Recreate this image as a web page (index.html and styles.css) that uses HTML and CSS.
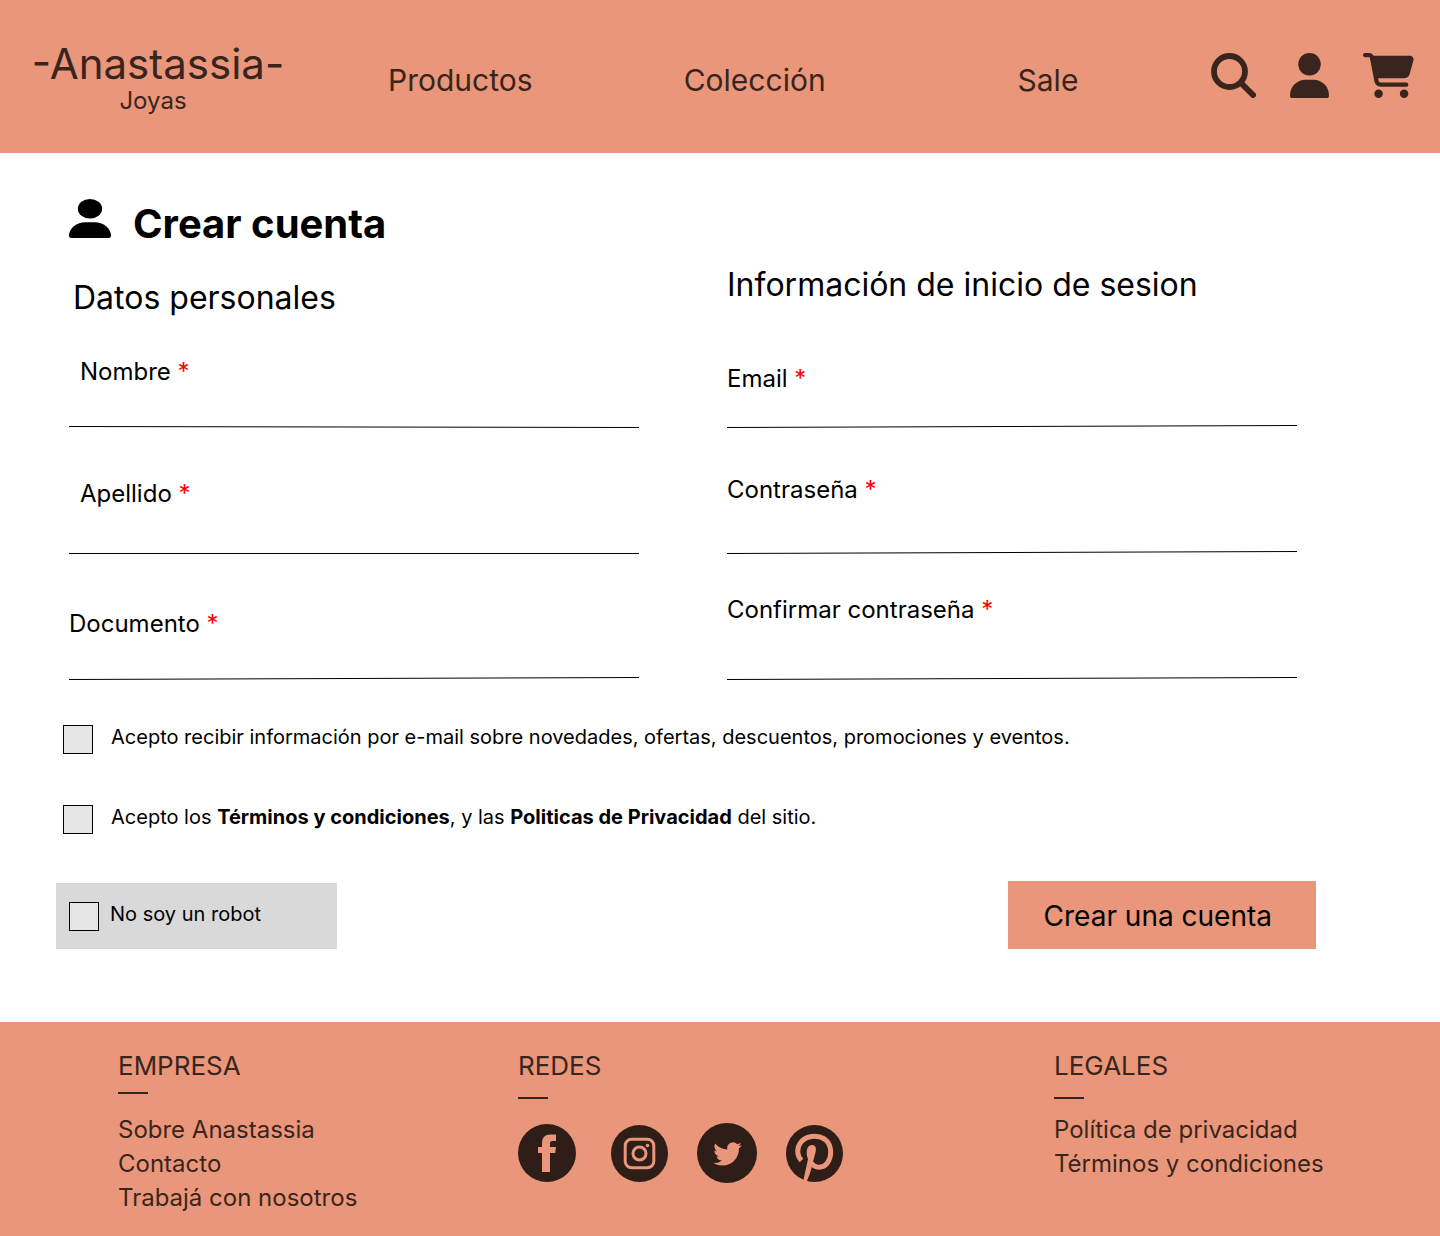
FILE: index.html
```html
<!DOCTYPE html>
<html lang="es">
<head>
<meta charset="utf-8">
<meta name="viewport" content="width=device-width, initial-scale=1">
<title>Anastassia Joyas - Crear cuenta</title>
<link rel="stylesheet" href="styles.css">
</head>
<body>
<header class="header">
  <a class="brand" href="#"><span class="brand-name">-Anastassia-</span><span class="brand-sub">Joyas</span></a>
  <nav class="nav">
    <a href="#">Productos</a>
    <a href="#">Colección</a>
    <a href="#">Sale</a>
  </nav>
  <div class="tools">
    <button class="tool" type="button" aria-label="Buscar">
      <svg width="45" height="45" viewBox="0 0 45 45"><circle cx="18.500" cy="18.500" r="15.500" fill="none" stroke="currentColor" stroke-width="5.800"/><path d="M30.500 30.500L42 42" stroke="currentColor" stroke-width="6" stroke-linecap="round"/></svg>
    </button>
    <button class="tool" type="button" aria-label="Mi cuenta">
      <svg width="39" height="45" viewBox="0 0 39 45" fill="currentColor"><circle cx="19.500" cy="11.250" r="11.250"/><path d="M15.500 26.700h8C32 26.700 39 33.600 39 42.400A2.600 2.600 0 0 1 36.400 45H2.600A2.600 2.600 0 0 1 0 42.400C0 33.600 7 26.700 15.500 26.700z"/></svg>
    </button>
    <button class="tool" type="button" aria-label="Carrito">
      <svg width="51" height="45" viewBox="0 0 576 512" preserveAspectRatio="none" fill="currentColor"><path d="M0 24C0 10.700 10.700 0 24 0H69.500c22 0 41.500 12.800 50.600 32h411c26.300 0 45.500 25 38.600 50.400l-41 152.300c-8.500 31.400-37 53.300-69.500 53.300H170.700l5.400 28.500c2.200 11.300 12.100 19.500 23.600 19.500H488c13.300 0 24 10.700 24 24s-10.700 24-24 24H199.700c-34.600 0-64.300-24.600-70.700-58.500L77.400 54.500c-.7-3.800-4-6.500-7.900-6.500H24C10.700 48 0 37.300 0 24zM128 464a48 48 0 1 1 96 0 48 48 0 1 1-96 0zm336-48a48 48 0 1 1 0 96 48 48 0 1 1 0-96z"/></svg>
    </button>
  </div>
</header>

<main class="main">
  <h1 class="title">
    <svg width="42" height="39" viewBox="0 0 39 45" preserveAspectRatio="none" fill="currentColor" aria-hidden="true"><circle cx="19.500" cy="11.250" r="11.250"/><path d="M15.500 26.700h8C32 26.700 39 33.600 39 42.400A2.600 2.600 0 0 1 36.400 45H2.600A2.600 2.600 0 0 1 0 42.400C0 33.600 7 26.700 15.500 26.700z"/></svg>
    Crear cuenta
  </h1>
  <form class="form">
    <div class="columns">
      <section class="column">
        <h2 class="subtitle subtitle-low">Datos personales</h2>
        <div class="field indent">
          <label for="nombre">Nombre <span class="req">*</span></label>
          <input class="h-s" id="nombre" type="text">
          <svg class="rule" viewBox="0 0 570 3" preserveAspectRatio="none"><path d="M0 1.500L570 2.500"/></svg>
        </div>
        <div class="field indent">
          <label for="apellido">Apellido <span class="req">*</span></label>
          <input class="h-m" id="apellido" type="text">
          <svg class="rule" viewBox="0 0 570 3" preserveAspectRatio="none"><path d="M0 2.500H570"/></svg>
        </div>
        <div class="field">
          <label for="documento">Documento <span class="req">*</span></label>
          <input class="h-s" id="documento" type="text">
          <svg class="rule" viewBox="0 0 570 3" preserveAspectRatio="none"><path d="M0 2.500L570 .5"/></svg>
        </div>
      </section>
      <section class="column">
        <h2 class="subtitle">Información de inicio de sesion</h2>
        <div class="field">
          <label for="email">Email <span class="req">*</span></label>
          <input class="h-xs" id="email" type="email">
          <svg class="rule" viewBox="0 0 570 3" preserveAspectRatio="none"><path d="M0 2.500L570 .5"/></svg>
        </div>
        <div class="field">
          <label for="clave">Contraseña <span class="req">*</span></label>
          <input class="h-l" id="clave" type="password">
          <svg class="rule" viewBox="0 0 570 3" preserveAspectRatio="none"><path d="M0 2.500L570 .5"/></svg>
        </div>
        <div class="field">
          <label for="clave2">Confirmar contraseña <span class="req">*</span></label>
          <input class="h-xl" id="clave2" type="password">
          <svg class="rule" viewBox="0 0 570 3" preserveAspectRatio="none"><path d="M0 2.500L570 .5"/></svg>
        </div>
      </section>
    </div>
    <div class="checks">
      <div class="check"><input id="news" type="checkbox"><label for="news">Acepto recibir información por e-mail sobre novedades, ofertas, descuentos, promociones y eventos.</label></div>
      <div class="check"><input id="terms" type="checkbox"><label for="terms">Acepto los <b>Términos y condiciones</b>, y las <b>Politicas de Privacidad</b> del sitio.</label></div>
    </div>
    <div class="actions">
      <div class="check robot"><input id="robot" type="checkbox"><label for="robot">No soy un robot</label></div>
      <button class="submit" type="submit">Crear una cuenta</button>
    </div>
  </form>
</main>

<footer class="footer">
  <section class="group">
    <h3>EMPRESA</h3>
    <ul>
      <li><a href="#">Sobre Anastassia</a></li>
      <li><a href="#">Contacto</a></li>
      <li><a href="#">Trabajá con nosotros</a></li>
    </ul>
  </section>
  <section class="group group-low">
    <h3>REDES</h3>
    <div class="social">
      <a href="#" aria-label="Facebook"><svg width="58" height="58" viewBox="0 0 58 58"><circle class="disc" cx="29" cy="29" r="29"/><path class="mark" d="M24 48V29h-4v-6h4v-3.500c0-6 3-9 8.500-9H38v6.500h-3.500c-1.800 0-2.500.8-2.500 2.300V23h6l-.8 6H32v19z"/></svg></a>
      <a href="#" aria-label="Instagram"><svg width="57" height="57" viewBox="0 0 57 57"><circle class="disc" cx="28.500" cy="28.500" r="28.500"/><rect class="line" x="14.200" y="14.200" width="28.600" height="28.600" rx="6.500"/><circle class="line" cx="28.500" cy="28.500" r="6.500"/><circle class="mark" cx="36.500" cy="20.500" r="1.800"/></svg></a>
      <a href="#" aria-label="Twitter"><svg width="60" height="60" viewBox="0 0 60 60"><circle class="disc" cx="30" cy="30" r="30"/><g transform="translate(16.300 16.700) scale(1.190)"><path class="mark" d="M23.950 4.570a10 10 0 0 1-2.820.77 4.960 4.960 0 0 0 2.160-2.720c-.95.550-2 .95-3.130 1.180a4.920 4.920 0 0 0-8.380 4.480C7.690 8.100 4.070 6.130 1.640 3.160a4.920 4.920 0 0 0 1.520 6.570 4.900 4.900 0 0 1-2.230-.61v.06a4.920 4.920 0 0 0 3.950 4.830 5 5 0 0 1-2.210.08 4.940 4.940 0 0 0 4.600 3.420A9.870 9.870 0 0 1 0 19.540a14 14 0 0 0 7.550 2.210c9.050 0 14-7.500 14-13.980 0-.21 0-.42-.02-.63a9.900 9.900 0 0 0 2.420-2.570z"/></g></svg></a>
      <a href="#" aria-label="Pinterest"><svg width="57" height="57" viewBox="0 0 57 57"><circle class="disc" cx="28.500" cy="28.500" r="28.500"/><path class="mark" d="M17 57L22 34C20.500 31 20.500 27 21 24.500 21.700 21.300 24 20 26 20 29 20 30.500 22.500 29.800 26L25.500 43C24 49 22.500 52 20.500 57z"/><path class="curl" d="M15.500 35.500C11 31 10.500 24 14 18.500 19 10.500 31 9.500 38.500 14 46 19.500 46.500 31 41 38.500 37 43.500 29 43.500 25.500 38"/></svg></a>
    </div>
  </section>
  <section class="group group-low">
    <h3>LEGALES</h3>
    <ul>
      <li><a href="#">Política de privacidad</a></li>
      <li><a href="#">Términos y condiciones</a></li>
    </ul>
  </section>
</footer>
</body>
</html>
```

FILE: styles.css
```css
:root {
  --salmon: #e9967a;
  --brown: #3a251e;
  --disc: #2f1e18;
}
* { box-sizing: border-box; }
body {
  margin: 0;
  min-height: 100vh;
  display: flex;
  flex-direction: column;
  background: #fff;
  color: #000;
  font-family: Inter, "Liberation Sans", sans-serif;
}
h1, h2, h3, ul { margin: 0; padding: 0; font-weight: 400; }
ul { list-style: none; }
a { color: inherit; text-decoration: none; }
button { border: 0; font: inherit; color: inherit; cursor: pointer; }
svg { display: block; flex: none; }

.header {
  display: flex;
  align-items: flex-start;
  padding: 38px 26px 35px 32px;
  min-height: 153px;
  background: var(--salmon);
  color: var(--brown);
}
.brand { display: flex; flex-direction: column; align-items: center; width: 252px; }
.brand-name { font-size: 42px; line-height: 52px; white-space: nowrap; }
.brand-sub { padding-right: 10px; font-size: 24px; line-height: 22px; }
.nav {
  flex: 1;
  display: grid;
  grid-template-columns: 295fr 333fr 193fr;
  padding: 24px 0 0 104px;
  font-size: 30px;
  line-height: 36px;
}
.tools { display: flex; gap: 34px; padding-top: 15px; }
.tool { padding: 0; background: none; }

.main { padding: 46px 124px 73px 56px; }
.title {
  display: flex;
  align-items: flex-start;
  gap: 22px;
  padding-left: 13px;
  font-size: 40px;
  font-weight: 700;
  line-height: 50px;
}
.columns {
  display: grid;
  grid-template-columns: 1fr 1fr;
  gap: 88px;
  padding: 0 19px 0 13px;
}
.column { display: flex; flex-direction: column; }
.subtitle { height: 50px; padding-top: 17px; font-size: 32px; line-height: 38px; }
.subtitle-low { padding: 30px 0 0 4px; }
.field { display: flex; flex-direction: column; justify-content: flex-end; height: 126px; }
.subtitle + .field { height: 129px; }
.field label { font-size: 24px; line-height: 30px; }
.indent label { padding-left: 11px; }
.field input {
  width: 100%;
  padding: 0 10px;
  border: 0;
  outline: 0;
  background: none;
  font: inherit;
  font-size: 20px;
}
.h-xs { height: 31px; }
.h-s { height: 38px; }
.h-m { height: 42px; }
.h-l { height: 46px; }
.h-xl { height: 52px; }
.req { color: #f00; }
.rule { width: 100%; height: 3px; stroke: #000; stroke-width: 1; }

.checks { display: grid; gap: 51px; padding: 45px 0 0 7px; }
.check { display: flex; align-items: flex-start; gap: 18px; font-size: 20px; line-height: 24px; }
.check input {
  appearance: none;
  flex: none;
  width: 30px;
  height: 29px;
  margin: 0;
  border: 1px solid #000;
  background: #e6e6e6;
}
.check input:checked { background: var(--salmon); }
.actions { display: flex; justify-content: space-between; align-items: flex-end; padding-top: 47px; }
.robot { gap: 11px; width: 281px; padding: 19px 13px 18px; background: #d9d9d9; }
.submit { padding: 18px 44px 16px 36px; background: var(--salmon); font-size: 28px; line-height: 34px; }

.footer {
  flex: 1;
  display: grid;
  grid-template-columns: 400fr 536fr 386fr;
  padding: 28px 0 20px 118px;
  background: var(--salmon);
  color: var(--brown);
}
.group h3 { font-size: 26px; line-height: 32px; }
.group h3::after { content: ""; display: block; width: 30px; height: 2px; margin-top: 10px; background: currentColor; }
.group-low h3::after { margin-top: 15px; }
.group ul { padding-top: 19px; font-size: 24px; line-height: 34px; }
.group-low ul { padding-top: 14px; }
.social { display: flex; align-items: center; gap: 29px; padding-top: 24px; }
.social a:first-child { padding-right: 6px; }
.disc { fill: var(--disc); }
.mark { fill: var(--salmon); }
.line { fill: none; stroke: var(--salmon); stroke-width: 3; }
.curl { fill: none; stroke: var(--salmon); stroke-width: 5; }
```
